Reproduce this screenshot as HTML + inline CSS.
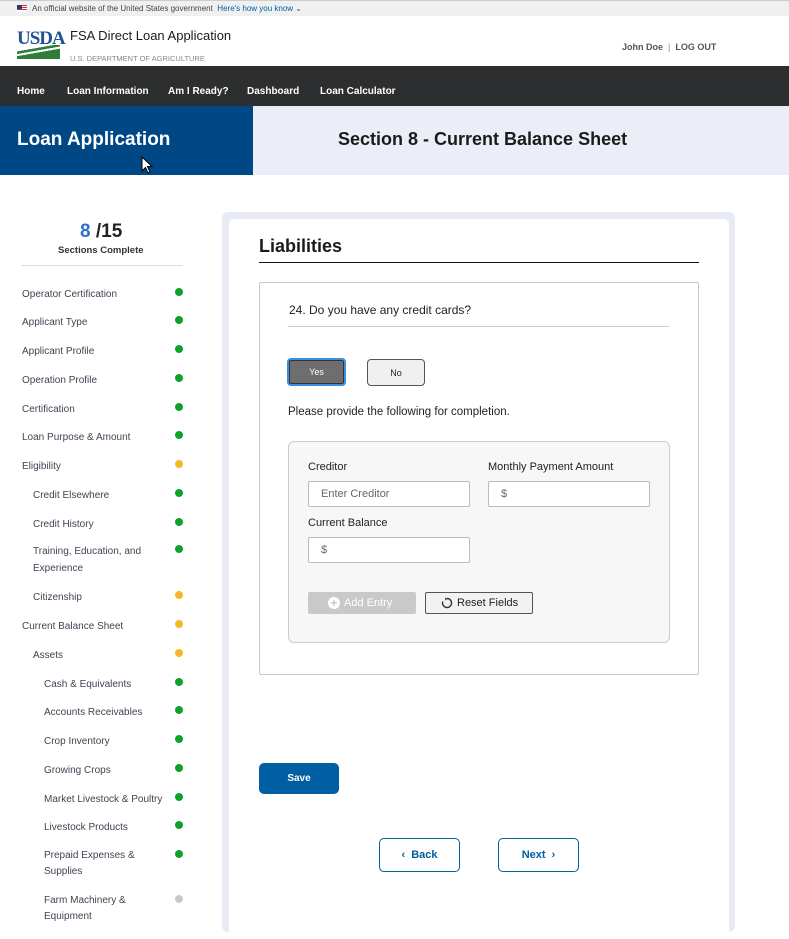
<!DOCTYPE html>
<html><head><meta charset="utf-8"><style>
*{margin:0;padding:0;box-sizing:border-box}
body{width:789px;height:921px;overflow:hidden;background:#fff;font-family:"Liberation Sans",sans-serif;position:relative;color:#1b1b1b}
.a{position:absolute}
.gov{top:0;left:0;width:789px;height:16px;background:#f0f0f0;border-top:1px solid #ccc;font-size:8px;color:#444;line-height:15px;padding-left:32px}
.nav{top:66px;left:0;width:789px;height:40px;background:#2d2e2f;color:#fff;font-size:10px;font-weight:bold}
.nav span{position:absolute;top:20px}
.si{font-size:10px;color:#3d4551;white-space:nowrap;margin-top:1px}
.dot{width:8px;height:8px;border-radius:50%;left:175px}
.g{background:#10a12b}.y{background:#f7b52e}.n{background:#c9c9c9}
.inp{background:#fff;border:1px solid #bbb;border-radius:2px;height:26px;width:162px;font-size:11px;color:#666;line-height:24px;padding-left:12px}
.lbl{font-size:11px;color:#222;margin-top:1px}
</style></head><body>
<div class="a gov"><span class="a" style="left:17px;top:4px;width:10px;height:7px;background:linear-gradient(#c33 0 15%,#fff 15% 30%,#c33 30% 45%,#fff 45% 60%,#c33 60% 75%,#fff 75%)"><span class="a" style="left:0;top:0;width:5px;height:4px;background:#1f3b82"></span></span>An official website of the United States government &nbsp;<span style="color:#005ea2">Here's how you know ⌄</span></div>
<div class="a" style="left:17px;top:28px;font-family:'Liberation Serif',serif;font-size:19px;color:#205493;font-weight:bold;letter-spacing:-1px">USDA</div>
<div class="a" style="left:17px;top:45px;width:43px;height:14px;background:linear-gradient(170deg,#fff 0 30%,#2e7d3a 30% 42%,#fff 42% 52%,#2e7d3a 52%)"></div>
<div class="a" style="left:70px;top:28px;font-size:13px;color:#1b1b1b">FSA Direct Loan Application</div>
<div class="a" style="left:70px;top:54px;font-size:7.5px;color:#888">U.S. DEPARTMENT OF AGRICULTURE</div>
<div class="a" style="left:622px;top:42px;font-size:9px;color:#555;font-weight:bold">John Doe &nbsp;<span style="color:#888;font-weight:normal">|</span>&nbsp; LOG OUT</div>
<div class="a nav"><span style="left:17px">Home</span><span style="left:67px">Loan Information</span><span style="left:168px">Am I Ready?</span><span style="left:247px">Dashboard</span><span style="left:320px">Loan Calculator</span></div>
<div class="a" style="top:106px;left:0;width:253px;height:69px;background:#004785"></div>
<div class="a" style="top:106px;left:253px;width:536px;height:69px;background:#ebeef7"></div>
<div class="a" style="top:129px;left:17px;color:#fff;font-size:19px;font-weight:bold">Loan Application</div>
<div class="a" style="top:129px;left:338px;color:#1b1b1b;font-size:18px;font-weight:bold">Section 8 - Current Balance Sheet</div>
<svg class="a" style="left:141px;top:156px" width="12" height="18" viewBox="0 0 12 18"><path d="M1 1L1 15L4.5 11.5L7 17L9 16L6.5 10.5L11 10.5Z" fill="#fff" stroke="#000" stroke-width="1"/></svg>

<div class="a" style="top:221px;left:80px;font-size:19px;font-weight:bold;color:#222"><span style="color:#2e6fd0">8</span> /15</div>
<div class="a" style="top:245px;left:58px;font-size:9.5px;font-weight:bold;color:#333">Sections Complete</div>
<div class="a" style="top:265px;left:21px;width:162px;height:1px;background:#ddd"></div>

<div class="a si" style="left:22px;top:288px">Operator Certification</div><div class="a dot g" style="top:288px"></div>
<div class="a si" style="left:22px;top:316px">Applicant Type</div><div class="a dot g" style="top:316px"></div>
<div class="a si" style="left:22px;top:345px">Applicant Profile</div><div class="a dot g" style="top:345px"></div>
<div class="a si" style="left:22px;top:374px">Operation Profile</div><div class="a dot g" style="top:374px"></div>
<div class="a si" style="left:22px;top:403px">Certification</div><div class="a dot g" style="top:403px"></div>
<div class="a si" style="left:22px;top:431px">Loan Purpose &amp; Amount</div><div class="a dot g" style="top:431px"></div>
<div class="a si" style="left:22px;top:460px">Eligibility</div><div class="a dot y" style="top:460px"></div>
<div class="a si" style="left:33px;top:489px">Credit Elsewhere</div><div class="a dot g" style="top:489px"></div>
<div class="a si" style="left:33px;top:518px">Credit History</div><div class="a dot g" style="top:518px"></div>
<div class="a si" style="left:33px;top:542px;line-height:17px">Training, Education, and<br>Experience</div><div class="a dot g" style="top:545px"></div>
<div class="a si" style="left:33px;top:591px">Citizenship</div><div class="a dot y" style="top:591px"></div>
<div class="a si" style="left:22px;top:620px">Current Balance Sheet</div><div class="a dot y" style="top:620px"></div>
<div class="a si" style="left:33px;top:649px">Assets</div><div class="a dot y" style="top:649px"></div>
<div class="a si" style="left:44px;top:678px">Cash &amp; Equivalents</div><div class="a dot g" style="top:678px"></div>
<div class="a si" style="left:44px;top:706px">Accounts Receivables</div><div class="a dot g" style="top:706px"></div>
<div class="a si" style="left:44px;top:735px">Crop Inventory</div><div class="a dot g" style="top:735px"></div>
<div class="a si" style="left:44px;top:764px">Growing Crops</div><div class="a dot g" style="top:764px"></div>
<div class="a si" style="left:44px;top:793px">Market Livestock &amp; Poultry</div><div class="a dot g" style="top:793px"></div>
<div class="a si" style="left:44px;top:821px">Livestock Products</div><div class="a dot g" style="top:821px"></div>
<div class="a si" style="left:44px;top:847px;line-height:16px">Prepaid Expenses &amp;<br>Supplies</div><div class="a dot g" style="top:850px"></div>
<div class="a si" style="left:44px;top:892px;line-height:16px">Farm Machinery &amp;<br>Equipment</div><div class="a dot n" style="top:895px"></div>

<div class="a" style="left:222px;top:212px;width:513px;height:720px;background:#e8ebf5;border-radius:6px"></div>
<div class="a" style="left:229px;top:219px;width:500px;height:720px;background:#fff;border-radius:5px"></div>
<div class="a" style="left:259px;top:236px;font-size:18px;font-weight:bold;color:#1b1b1b">Liabilities</div>
<div class="a" style="left:259px;top:262px;width:440px;height:1px;background:#111"></div>
<div class="a" style="left:259px;top:282px;width:440px;height:393px;border:1px solid #c8c8c8;border-radius:2px"></div>
<div class="a" style="left:289px;top:303px;font-size:12px;color:#222">24. Do you have any credit cards?</div>
<div class="a" style="left:288px;top:326px;width:381px;height:1px;background:#ccc"></div>
<div class="a" style="left:287px;top:358px;width:59px;height:28px;background:#6d6e70;border:2px solid #3a8de0;border-radius:4px;color:#fff;font-size:9px;text-align:center;line-height:25px;box-shadow:inset 0 0 0 1px #333">Yes</div>
<div class="a" style="left:367px;top:359px;width:58px;height:27px;background:#f0f0f0;border:1px solid #555;border-radius:4px;color:#222;font-size:9px;text-align:center;line-height:26px">No</div>
<div class="a" style="left:288px;top:406px;font-size:11.5px;color:#222">Please provide the following for completion.</div>
<div class="a" style="left:288px;top:441px;width:382px;height:202px;background:#f7f7f7;border:1px solid #ccc;border-radius:6px"></div>
<div class="a lbl" style="left:308px;top:460px">Creditor</div>
<div class="a lbl" style="left:488px;top:460px">Monthly Payment Amount</div>
<div class="a inp" style="left:308px;top:481px">Enter Creditor</div>
<div class="a inp" style="left:488px;top:481px">$</div>
<div class="a lbl" style="left:308px;top:516px">Current Balance</div>
<div class="a inp" style="left:308px;top:537px">$</div>
<div class="a" style="left:308px;top:592px;width:108px;height:22px;background:#c9c9c9;border-radius:2px;color:#fff;font-size:11px;line-height:22px;padding-left:20px"><span class="a" style="left:20px;top:5px;width:12px;height:12px;border-radius:50%;background:#fff;color:#c9c9c9;font-size:12px;line-height:12px;text-align:center;font-weight:bold">+</span><span style="margin-left:16px">Add Entry</span></div>
<div class="a" style="left:425px;top:592px;width:108px;height:22px;background:#f2f2f2;border:1px solid #555;border-radius:2px;color:#222;font-size:11px;line-height:20px;padding-left:31px"><svg class="a" style="left:15px;top:4px" width="12" height="12" viewBox="0 0 12 12"><path d="M6 1.5A4.5 4.5 0 1 1 1.8 4.5" fill="none" stroke="#333" stroke-width="1.4"/><path d="M4 0.5L6.5 1.7L4.5 3.6Z" fill="#333"/></svg>Reset Fields</div>
<div class="a" style="left:259px;top:763px;width:80px;height:31px;background:#005ea2;border-radius:5px;color:#fff;font-size:10px;font-weight:bold;text-align:center;line-height:31px">Save</div>
<div class="a" style="left:379px;top:838px;width:81px;height:34px;border:1px solid #005ea2;border-radius:5px;color:#005ea2;font-size:11px;font-weight:bold;text-align:center;line-height:32px">‹&nbsp; Back</div>
<div class="a" style="left:498px;top:838px;width:81px;height:34px;border:1px solid #005ea2;border-radius:5px;color:#005ea2;font-size:11px;font-weight:bold;text-align:center;line-height:32px">Next &nbsp;›</div>
</body></html>
